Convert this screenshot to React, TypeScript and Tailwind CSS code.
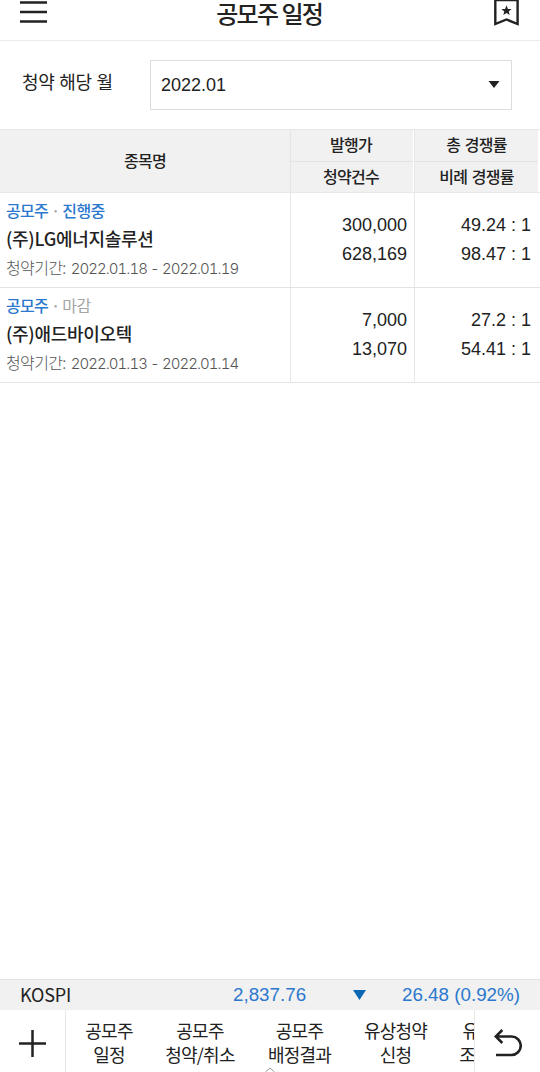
import React from 'react';

interface Offering {
  status: string;
  active: boolean;
  name: string;
  period: string;
  price: string;
  count: string;
  totalRate: string;
  ratioRate: string;
}

const offerings: Offering[] = [
  {
    status: '진행중',
    active: true,
    name: '(주)LG에너지솔루션',
    period: '2022.01.18 - 2022.01.19',
    price: '300,000',
    count: '628,169',
    totalRate: '49.24 : 1',
    ratioRate: '98.47 : 1'
  },
  {
    status: '마감',
    active: false,
    name: '(주)애드바이오텍',
    period: '2022.01.13 - 2022.01.14',
    price: '7,000',
    count: '13,070',
    totalRate: '27.2 : 1',
    ratioRate: '54.41 : 1'
  }
];

const tabs = [
  { lines: ['공모주', '일정'], width: 'w-[86px]' },
  { lines: ['공모주', '청약/취소'], width: 'w-[96px]' },
  { lines: ['공모주', '배정결과'], width: 'w-[103px]' },
  { lines: ['유상청약', '신청'], width: 'w-[89px]' },
  { lines: ['유상청약', '조회/취소'], width: 'w-[108px]' }
];

const Header: React.FC = () => (
  <header className="flex h-[41px] shrink-0 items-start justify-between border-b border-[#ebebeb] pl-[19.5px] pr-[21px]">
    <button aria-label="menu">
      <svg width="27" height="24" viewBox="0 0 27 24" stroke="#222" strokeWidth="2.5">
        <path d="M0 2.5H27M0 12H27M0 21.5H27" />
      </svg>
    </button>
    <h1 className="-ml-[2px] whitespace-nowrap text-[24px] leading-[26px] font-medium tracking-[-1.6px]">공모주 일정</h1>
    <button aria-label="bookmark">
      <svg width="25" height="26" viewBox="0 0 25 26" fill="none">
        <path d="M1.3 -2V24L12.5 19.5L23.6 24V-2M1.3 0H23.6" stroke="#222" strokeWidth="2.4" />
        <path d="M12.5 5.3L13.9 8.9L17.6 9.1L14.7 11.4L15.7 15L12.5 13L9.3 15L10.3 11.4L7.4 9.1L11.1 8.9Z" fill="#222" />
      </svg>
    </button>
  </header>
);

const MonthFilter: React.FC = () => (
  <div className="flex h-[88px] shrink-0 items-start pt-[19px]">
    <span className="w-[150px] pl-[22px] text-[18px] leading-[42px] tracking-[-0.3px] [word-spacing:1px]">청약 해당 월</span>
    <button className="flex h-[50px] w-[362px] items-center justify-between border border-[#ddd] pl-[10px] pr-[11px]">
      <span className="font-['Liberation_Sans'] text-[18px]">2022.01</span>
      <svg className="mb-px" width="12" height="7" viewBox="0 0 12 7">
        <path d="M0.5 0H11.5L6 7Z" fill="#222" />
      </svg>
    </button>
  </div>
);

const TableHead: React.FC = () => (
  <div className="flex h-16 shrink-0 border-y border-[#e8e8e8] pr-[2px] text-center text-[16px] font-medium tracking-[-0.7px]">
    <div className="w-[290px] bg-[#f1f1f1] leading-[60px]">종목명</div>
    <div className="w-[123px] border-l border-[#e4e4e4] bg-[#f1f1f1]">
      <div className="h-8 border-b border-[#e4e4e4] pr-[2px] leading-[29px]">발행가</div>
      <div className="pr-[2px] leading-[28px]">청약건수</div>
    </div>
    <div className="ml-px flex-1 border-l border-[#e8e8e8] bg-[#f1f1f1]">
      <div className="h-8 border-b border-[#e4e4e4] leading-[29px] [word-spacing:1.5px]">총 경쟁률</div>
      <div className="leading-[28px] [word-spacing:1.5px]">비례 경쟁률</div>
    </div>
  </div>
);

const OfferingRow: React.FC<{ item: Offering }> = ({ item }) => (
  <div className="flex h-[95px] shrink-0 border-b border-[#e4e4e4]">
    <div className="w-[290px] pl-[6px] pt-[3px] whitespace-nowrap">
      <div className="text-[16px] leading-[28px] font-medium tracking-[-0.7px]">
        <span className="text-[#2b78ce]">공모주</span>
        <span className="text-[#aaa]"> · </span>
        <span className={item.active ? 'text-[#2b78ce]' : 'font-normal text-[#a5a5a5]'}>{item.status}</span>
      </div>
      <div className="text-[18px] leading-[29px] font-medium tracking-[-0.3px]">{item.name}</div>
      <div className="text-[16px] leading-[28px] font-light tracking-[-0.65px] text-[#555]">
        청약기간:<span className="ml-[5px] font-[Inter] text-[15px] tracking-[-0.94px] tabular-nums">{item.period}</span>
      </div>
    </div>
    <div className="w-[124px] border-l border-[#e8e8e8] pr-[7px] pt-[18px] text-right font-['Liberation_Sans'] text-[18px] leading-[29px]">
      <div>{item.price}</div>
      <div>{item.count}</div>
    </div>
    <div className="flex-1 border-l border-[#e8e8e8] pr-[9px] pt-[18px] text-right font-['Liberation_Sans'] text-[18px] leading-[29px]">
      <div>{item.totalRate}</div>
      <div>{item.ratioRate}</div>
    </div>
  </div>
);

const IndexTicker: React.FC = () => (
  <div className="flex h-[31px] shrink-0 items-center border-t border-[#e2e2e2] bg-[#f1f1f1] pl-5 pr-5 font-['Liberation_Sans'] text-[18.8px] text-[#2b78ce]">
    <span className="w-[213px] pb-px font-['Noto_Sans_CJK_KR'] text-[18px] leading-[27px] tracking-[-0.2px] text-[#222]">KOSPI</span>
    <span>2,837.76</span>
    <svg className="ml-[47px]" width="13" height="10" viewBox="0 0 13 10">
      <path d="M0 0H13L6.5 10Z" fill="#0b68b4" />
    </svg>
    <span className="ml-auto">26.48 (0.92%)</span>
  </div>
);

const BottomBar: React.FC = () => (
  <nav className="relative flex h-[62px] shrink-0">
    <button aria-label="add" className="flex w-[66px] shrink-0 items-start justify-center border-r border-[#e8e8e8] pt-5">
      <svg width="27" height="27" viewBox="0 0 27 27" stroke="#222" strokeWidth="2.5">
        <path d="M0 13.5H27M13.5 0V27" />
      </svg>
    </button>
    <div className="flex w-[409px] shrink-0 items-start overflow-hidden border-r border-[#e8e8e8] pt-2">
      {tabs.map((tab, idx) => (
        <button key={idx} className={`${tab.width} shrink-0 whitespace-nowrap text-[18px] leading-[24px] tracking-[-0.8px]`}>
          {tab.lines.map(line => (
            <div key={line}>{line}</div>
          ))}
        </button>
      ))}
    </div>
    <button aria-label="back" className="flex flex-1 items-start pl-[19px] pt-[19px]">
      <svg width="28" height="30" viewBox="0 0 28 30" fill="none" stroke="#222" strokeWidth="2.6">
        <path d="M8.3 1L1.8 7.5L8.3 14M1.8 7.5H17.5A9 9 0 0 1 17.5 26H2" />
      </svg>
    </button>
    {/* Drawer handle peeking from the bottom edge */}
    <svg className="absolute bottom-0 left-[264px]" width="12" height="5" viewBox="0 0 12 5" fill="none">
      <path d="M1.5 5L6 1L10.5 5" stroke="#999" />
    </svg>
  </nav>
);

const App: React.FC = () => {
  return (
    <div className="flex h-screen w-full flex-col overflow-hidden bg-white font-['Noto_Sans_CJK_KR',sans-serif] text-[#222]">
      <Header />
      <MonthFilter />
      <TableHead />
      {offerings.map(item => (
        <OfferingRow key={item.name} item={item} />
      ))}
      <div className="flex-1" />
      <IndexTicker />
      <BottomBar />
    </div>
  );
};

export default App;
